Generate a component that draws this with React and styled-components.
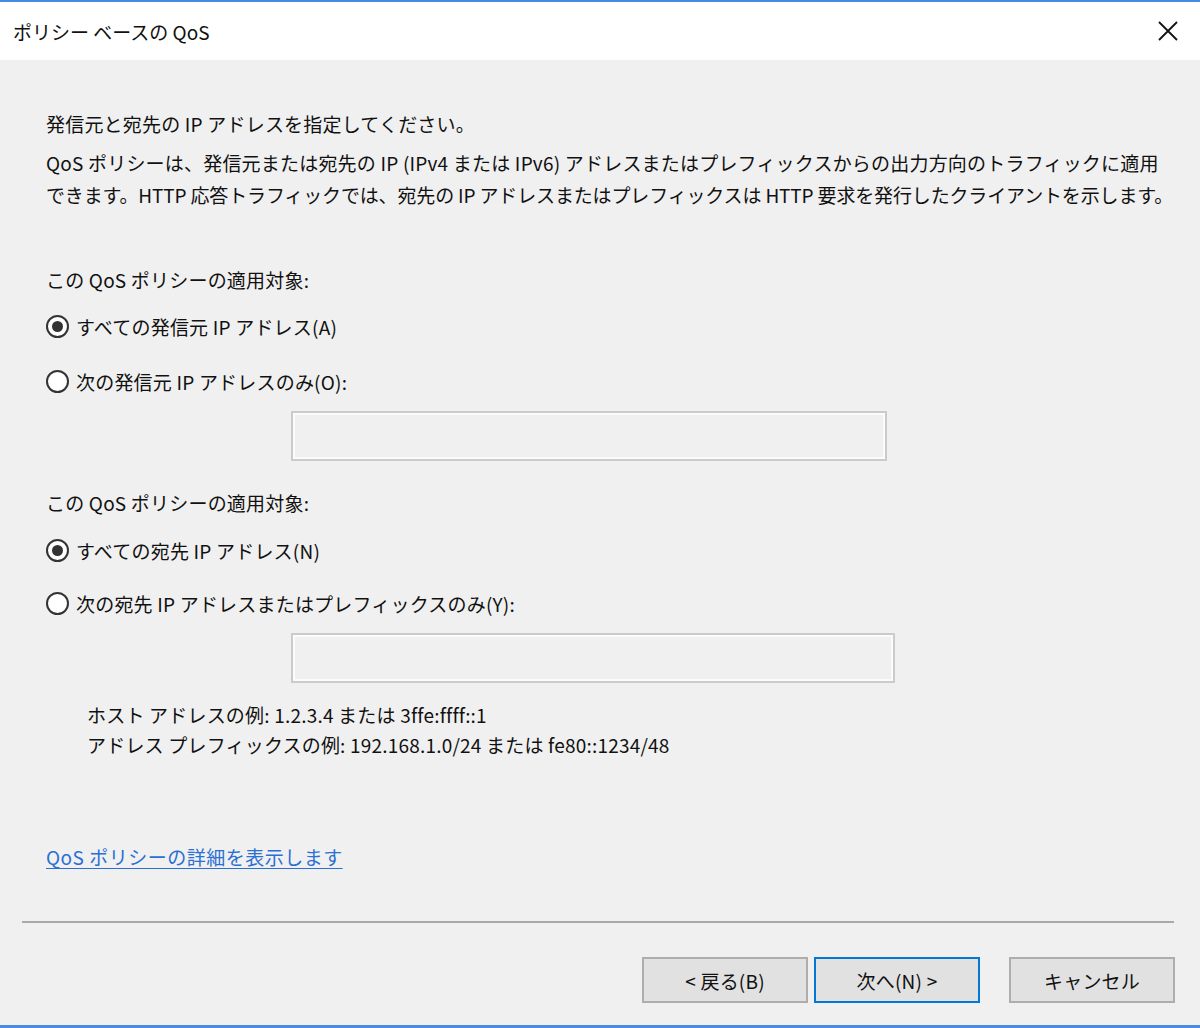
import React from 'react'
import styled, { createGlobalStyle } from 'styled-components'

const GlobalStyle = createGlobalStyle`
  html, body {
    margin: 0;
    padding: 0;
    background: #ffffff;
  }
  body {
    font-family: "Noto Sans CJK JP", "Noto Sans", sans-serif;
    color: #111;
  }
`;

const Window = styled.div`
  width: 1200px;
  height: 1028px;
  box-sizing: border-box;
  border-top: 2px solid #4a8ae0;
  border-bottom: 3px solid #4a8ae0;
  display: flex;
  flex-direction: column;
  background: #f0f0f0;
`;

const TitleBar = styled.div`
  height: 58px;
  flex: none;
  background: #ffffff;
  display: flex;
  align-items: center;
  justify-content: space-between;
  padding: 0 16px 0 13px;
`;

const Title = styled.div`
  font-size: 19px;
  line-height: 24px;
  margin-top: 2px;
`;

const CloseBtn = styled.div`
  width: 24px;
  height: 24px;
  display: flex;
  align-items: center;
  justify-content: center;
  margin-right: 4px;
`;

const Body = styled.div`
  flex: 1;
  display: flex;
  flex-direction: column;
  padding: 48px 25px 0 46px;
  font-size: 19px;
  letter-spacing: 0.2px;
`;

const Line = styled.div`
  line-height: ${p => p.lh || 32}px;
  margin-top: ${p => p.mt || 0}px;
  margin-left: ${p => p.ml || 0}px;
  letter-spacing: ${p => (p.tight ? '-0.15px' : 'inherit')};
  white-space: nowrap;
`;

const RadioRow = styled.label`
  display: flex;
  align-items: center;
  height: 32px;
  margin-top: ${p => p.mt || 0}px;
  gap: 7px;
  white-space: nowrap;
`;

const RadioDot = styled.span`
  width: 23px;
  height: 23px;
  box-sizing: border-box;
  border-radius: 50%;
  border: 2px solid #333;
  background: #fff;
  display: flex;
  align-items: center;
  justify-content: center;
  flex: none;

  &::after {
    content: '';
    width: 11px;
    height: 11px;
    border-radius: 50%;
    background: ${p => (p.checked ? '#333' : 'transparent')};
  }
`;

const Field = styled.div`
  margin-top: 14px;
  margin-left: 245px;
  width: ${p => p.w}px;
  height: 50px;
  box-sizing: border-box;
  border: 2px solid #cbcbcb;
  box-shadow: inset 0 0 0 2px #fbfbfb;
  background: #f0f0f0;
`;

const Link = styled.a`
  margin-top: 81px;
  align-self: flex-start;
  line-height: 32px;
  color: #2a6fd4;
  letter-spacing: 0.5px;
  text-decoration: underline;
  text-underline-offset: 3px;
  cursor: pointer;
`;

const Separator = styled.div`
  margin: 48px 0 0 -24px;
  height: 2px;
  background: #a9a9a9;
  width: 1152px;
`;

const ButtonRow = styled.div`
  display: flex;
  justify-content: flex-end;
  margin-top: 34px;
`;

const Button = styled.button`
  width: 166px;
  height: 46px;
  margin-left: ${p => p.gap || 0}px;
  box-sizing: border-box;
  background: #e1e1e1;
  border: 2px solid ${p => (p.primary ? '#0078d7' : '#adadad')};
  font-family: inherit;
  font-size: 19px;
  letter-spacing: 0.2px;
  color: #111;
  padding: 0;
`;

const Radio = ({ checked, children, mt }) => (
  <RadioRow mt={mt}>
    <RadioDot checked={checked} />
    <span>{children}</span>
  </RadioRow>
)

const App = () => {
  return (
    <>
      <GlobalStyle />
      <Window>
        <TitleBar>
          <Title>ポリシー ベースの QoS</Title>
          <CloseBtn>
            <svg width="20" height="20" viewBox="0 0 20 20">
              <path d="M1 1 L19 19 M19 1 L1 19" stroke="#111" strokeWidth="1.8" fill="none" />
            </svg>
          </CloseBtn>
        </TitleBar>
        <Body>
          <Line>発信元と宛先の IP アドレスを指定してください。</Line>
          <Line mt={7}>QoS ポリシーは、発信元または宛先の IP (IPv4 または IPv6) アドレスまたはプレフィックスからの出力方向のトラフィックに適用</Line>
          <Line tight>できます。HTTP 応答トラフィックでは、宛先の IP アドレスまたはプレフィックスは HTTP 要求を発行したクライアントを示します。</Line>

          <Line mt={53}>この QoS ポリシーの適用対象:</Line>
          <Radio checked mt={14}>すべての発信元 IP アドレス(A)</Radio>
          <Radio mt={23}>次の発信元 IP アドレスのみ(O):</Radio>
          <Field w={596} />

          <Line mt={26}>この QoS ポリシーの適用対象:</Line>
          <Radio checked mt={15}>すべての宛先 IP アドレス(N)</Radio>
          <Radio mt={21}>次の宛先 IP アドレスまたはプレフィックスのみ(Y):</Radio>
          <Field w={604} />

          <Line lh={30} mt={17} ml={41}>ホスト アドレスの例: 1.2.3.4 または 3ffe:ffff::1</Line>
          <Line lh={30} ml={41}>アドレス プレフィックスの例: 192.168.1.0/24 または fe80::1234/48</Line>

          <Link>QoS ポリシーの詳細を表示します</Link>

          <Separator />

          <ButtonRow>
            <Button>&lt; 戻る(B)</Button>
            <Button primary gap={6}>次へ(N) &gt;</Button>
            <Button gap={29}>キャンセル</Button>
          </ButtonRow>
        </Body>
      </Window>
    </>
  )
}

export default App
